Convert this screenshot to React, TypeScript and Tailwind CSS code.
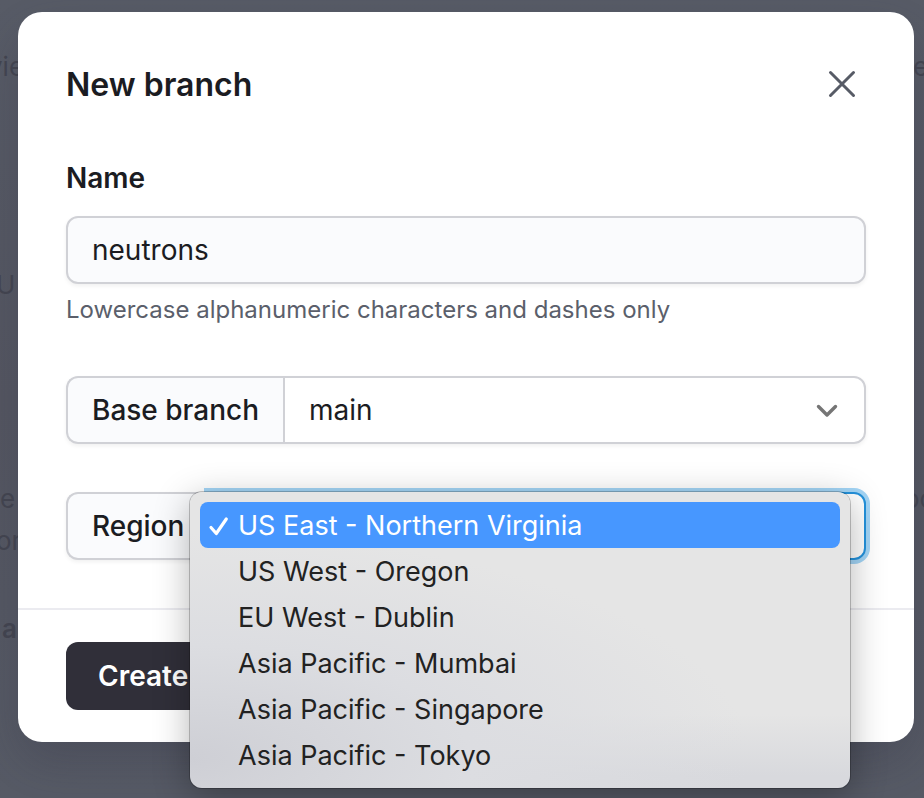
import { useState } from "react";

const regions = [
  "US East - Northern Virginia",
  "US West - Oregon",
  "EU West - Dublin",
  "Asia Pacific - Mumbai",
  "Asia Pacific - Singapore",
  "Asia Pacific - Tokyo",
];

function Backdrop() {
  return (
    <div
      aria-hidden="true"
      className="absolute inset-0 overflow-hidden bg-linear-to-b from-[#585c67] via-[#555762] to-[#575b66] text-[26px] leading-8 text-[#444651]"
    >
      <span className="absolute -left-3 top-[51px]">vie</span>
      <span className="absolute -left-1 top-[269px]">U</span>
      <span className="absolute left-0 top-[483px]">e</span>
      <span className="absolute -left-1 top-[525px]">or</span>
      <span className="absolute left-0.5 top-[613px] font-semibold">a</span>
      <span className="absolute left-[913px] top-[51px]">e</span>
      <span className="absolute left-[904px] top-[483px]">oc</span>
    </div>
  );
}

function RegionMenu({ value, onPick }: { value: string; onPick: (region: string) => void }) {
  return (
    <div
      role="listbox"
      aria-label="Region options"
      className="absolute left-[124px] right-4 top-0 flex flex-col rounded-xl bg-[radial-gradient(ellipse_at_0%_90%,#cecfd5_0%,#dcdde1_30%,transparent_60%),linear-gradient(to_bottom,#e5e5e5_75%,#d8d9dd_96%)] p-2.5 shadow-[0_0_0_1px_rgba(0,0,0,0.22),0_8px_36px_rgba(0,0,0,0.3)]"
    >
      {regions.map((region) => {
        const selected = region === value;
        return (
          <button
            key={region}
            type="button"
            role="option"
            aria-selected={selected}
            onClick={() => onPick(region)}
            className={
              selected
                ? "flex h-[46px] items-center rounded-lg bg-[#4797ff] pl-2 pt-0.5 text-left text-[27px] text-white"
                : "flex h-[46px] items-center pl-2 pt-0.5 text-left text-[27px] text-[#222222]"
            }
          >
            <span className="flex w-[30px] shrink-0">
              {selected && (
                <svg width="22" height="22" viewBox="0 0 22 22" fill="none" aria-hidden="true">
                  <path
                    d="M3 12.5L8.300 18.500L18.300 4"
                    stroke="currentColor"
                    strokeWidth="3.2"
                    strokeLinecap="round"
                    strokeLinejoin="round"
                  />
                </svg>
              )}
            </span>
            <span className="whitespace-nowrap">{region}</span>
          </button>
        );
      })}
    </div>
  );
}

export default function App() {
  const [region, setRegion] = useState(regions[0]);

  return (
    <div className="relative min-h-screen overflow-hidden pt-3 pr-2.5 pb-14 pl-[18px] font-['Inter',sans-serif] text-[#1b1c22]">
      <Backdrop />
      <div
        role="dialog"
        aria-labelledby="dialog-title"
        className="relative rounded-3xl bg-white shadow-[0_20px_50px_rgba(40,40,60,0.25)]"
      >
        <form onSubmit={(event) => event.preventDefault()}>
          <div className="p-12">
            <div className="flex items-start justify-between">
              <h2 id="dialog-title" className="text-[32px] font-semibold leading-[50px]">
                New branch
              </h2>
              <button type="button" aria-label="Close" className="flex size-12 items-center justify-center text-[#575b66]">
                <svg width="28" height="28" viewBox="0 0 28 28" fill="none" aria-hidden="true">
                  <path d="M2.500 2.500L25.500 25.500M25.500 2.500L2.500 25.500" stroke="currentColor" strokeWidth="3" strokeLinecap="round" />
                </svg>
              </button>
            </div>

            <label htmlFor="name" className="mt-12 block text-[28px] font-semibold leading-10">
              Name
            </label>
            <input
              id="name"
              type="text"
              defaultValue="neutrons"
              aria-describedby="name-hint"
              className="mt-[18px] block h-[68px] w-full rounded-xl border-2 border-[#d0d1d6] bg-[#fafbfd] px-6 text-[28px] shadow-[0_2px_4px_rgba(0,0,0,0.06)] outline-none"
            />
            <p id="name-hint" className="mt-2.5 text-2xl leading-8 text-[#5b5f6b]">
              Lowercase alphanumeric characters and dashes only
            </p>

            <div className="mt-[50px] flex h-[68px] rounded-xl shadow-[0_2px_4px_rgba(0,0,0,0.06)]">
              <label
                htmlFor="base"
                className="flex items-center whitespace-nowrap rounded-l-xl border-2 border-r-0 border-[#d0d1d6] bg-[#fafbfd] px-6 text-[28px] font-medium"
              >
                Base branch
              </label>
              <div className="relative grow">
                <select
                  id="base"
                  className="size-full appearance-none rounded-r-xl border-2 border-[#d0d1d6] bg-white pl-6 pr-16 text-[28px] outline-none"
                >
                  <option>main</option>
                </select>
                <svg
                  width="24"
                  height="24"
                  viewBox="0 0 24 24"
                  fill="none"
                  aria-hidden="true"
                  className="pointer-events-none absolute inset-y-0 right-[27px] my-auto text-[#757575]"
                >
                  <path
                    d="M3.500 8.500L12 17L20.500 8.500"
                    stroke="currentColor"
                    strokeWidth="3.4"
                    strokeLinecap="round"
                    strokeLinejoin="round"
                  />
                </svg>
              </div>
            </div>

            <div className="relative z-10 mt-12 flex h-[68px]">
              <label
                htmlFor="region"
                className="flex items-center rounded-l-xl border-2 border-r-0 border-[#d0d1d6] bg-[#fafbfd] px-6 text-[28px] font-medium shadow-[0_2px_4px_rgba(0,0,0,0.06)]"
              >
                Region
              </label>
              <select
                id="region"
                value={region}
                onChange={(event) => setRegion(event.target.value)}
                className="grow appearance-none rounded-r-xl border-2 border-[#2492dc] bg-white px-6 text-[28px] shadow-[0_0_0_4px_#a3d5f6] outline-none"
              >
                {regions.map((item) => (
                  <option key={item}>{item}</option>
                ))}
              </select>
              <RegionMenu value={region} onPick={setRegion} />
            </div>
          </div>

          <div className="border-t-2 border-[#ebebf0] px-12 py-8">
            <button
              type="submit"
              className="h-[68px] rounded-xl bg-[#302f39] px-8 text-[28px] font-semibold text-white"
            >
              Create
            </button>
          </div>
        </form>
      </div>
    </div>
  );
}
